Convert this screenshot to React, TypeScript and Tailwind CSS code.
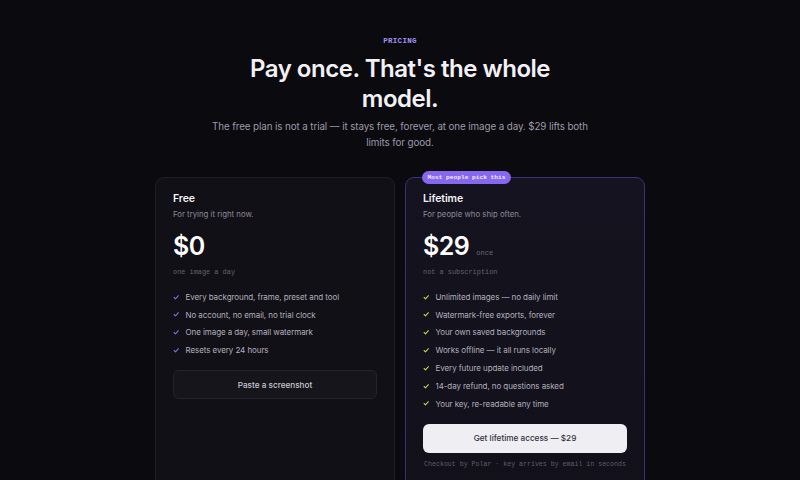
import React from 'react';

const freeFeatures = [
  'Every background, frame, preset and tool',
  'No account, no email, no trial clock',
  'One image a day, small watermark',
  'Resets every 24 hours',
];

const lifetimeFeatures = [
  'Unlimited images — no daily limit',
  'Watermark-free exports, forever',
  'Your own saved backgrounds',
  'Works offline — it all runs locally',
  'Every future update included',
  '14-day refund, no questions asked',
  'Your key, re-readable any time',
];

const Check = ({ className }: { className: string }) => (
  <svg viewBox="0 0 12 12" className={className} fill="none" stroke="currentColor" strokeWidth="2" strokeLinecap="round" strokeLinejoin="round">
    <path d="M2 6.5l2.6 2.4L10 3.2" />
  </svg>
);

const FeatureList = ({ items, checkClass }: { items: string[]; checkClass: string }) => (
  <ul className="mt-[11px] flex flex-col">
    {items.map((item) => (
      <li key={item} className="flex items-center gap-[6px] h-[17.8px] text-[8px] tracking-[-0.01em] text-[#b1afbd]">
        <Check className={`w-[6.5px] h-[6.5px] shrink-0 ${checkClass}`} />
        <span>{item}</span>
      </li>
    ))}
  </ul>
);

export default function App() {
  return (
    <div className="min-h-screen bg-[#0b0a0f] font-['Inter',sans-serif] pt-[36px]">
      <div className="flex flex-col items-center text-center">
        <div className="h-[10px] leading-[10px] font-['Liberation_Mono',monospace] text-[7.5px] font-bold tracking-[0.04em] text-[#a391f5]">PRICING</div>
        <h1 className="mt-[8px] max-w-[330px] text-[24px] leading-[30px] font-semibold tracking-[-0.02em] text-[#f2f1f6]">
          Pay once. That's the whole model.
        </h1>
        <p className="mt-[5px] max-w-[400px] text-[9.8px] leading-[16px] tracking-[-0.01em] text-[#9c9aa9]">
          The free plan is not a trial — it stays free, forever, at one image a day. $29 lifts both
          <br />
          limits for good.
        </p>
      </div>

      <div className="mt-[26px] mx-auto w-[490px] grid grid-cols-2 gap-[10px]">
        <div className="h-[320px] rounded-[9px] border border-[#1f1e26] bg-[#111016] px-[17px] pt-[14px]">
          <div className="h-[14px] leading-[14px] text-[10.5px] font-semibold tracking-[-0.01em] text-[#f2f1f6]">Free</div>
          <div className="mt-[2px] h-[12px] leading-[12px] text-[7.8px] text-[#8c8a99]">For trying it right now.</div>
          <div className="mt-[11px] flex items-baseline gap-[6px] h-[30px]">
            <span className="text-[25px] leading-[30px] font-semibold tracking-[-0.02em] text-white">$0</span>
          </div>
          <div className="mt-[6px] h-[10px] leading-[10px] font-['Liberation_Mono',monospace] text-[6.9px] text-[#64626f]">one image a day</div>
          <FeatureList items={freeFeatures} checkClass="text-[#7f6ff0]" />
          <button className="mt-[11px] w-full h-[29px] rounded-[6px] border border-[#25242d] bg-[#16151c] text-[8.2px] font-medium text-[#c8c7d1]">
            Paste a screenshot
          </button>
        </div>

        <div className="relative h-[320px] rounded-[9px] border border-[#3b3079] bg-gradient-to-b from-[#15131f] to-[#121019] px-[17px] pt-[14px]">
          <div className="absolute top-[-7px] left-[16px] h-[13px] px-[5.5px] rounded-full bg-[#8767f0] flex items-center font-['Liberation_Mono',monospace] text-[6.2px] font-bold text-[#f0ecff]">
            Most people pick this
          </div>
          <div className="h-[14px] leading-[14px] text-[10.5px] font-semibold tracking-[-0.01em] text-[#f2f1f6]">Lifetime</div>
          <div className="mt-[2px] h-[12px] leading-[12px] text-[7.8px] text-[#8c8a99]">For people who ship often.</div>
          <div className="mt-[11px] flex items-baseline gap-[7px] h-[30px]">
            <span className="text-[25px] leading-[30px] font-semibold tracking-[-0.02em] text-white">$29</span>
            <span className="font-['Liberation_Mono',monospace] text-[7px] text-[#6a6877]">once</span>
          </div>
          <div className="mt-[6px] h-[10px] leading-[10px] font-['Liberation_Mono',monospace] text-[6.9px] text-[#64626f]">not a subscription</div>
          <FeatureList items={lifetimeFeatures} checkClass="text-[#b5de4a]" />
          <button className="mt-[11px] w-full h-[29px] rounded-[6px] bg-[#efeef3] text-[8.2px] font-medium text-[#32313b]">
            Get lifetime access — $29
          </button>
          <div className="mt-[7px] -mx-[6px] h-[10px] leading-[10px] whitespace-nowrap text-center font-['Liberation_Mono',monospace] text-[6.6px] text-[#5f5d6b]">
            Checkout by Polar · key arrives by email in seconds
          </div>
        </div>
      </div>
    </div>
  );
}
